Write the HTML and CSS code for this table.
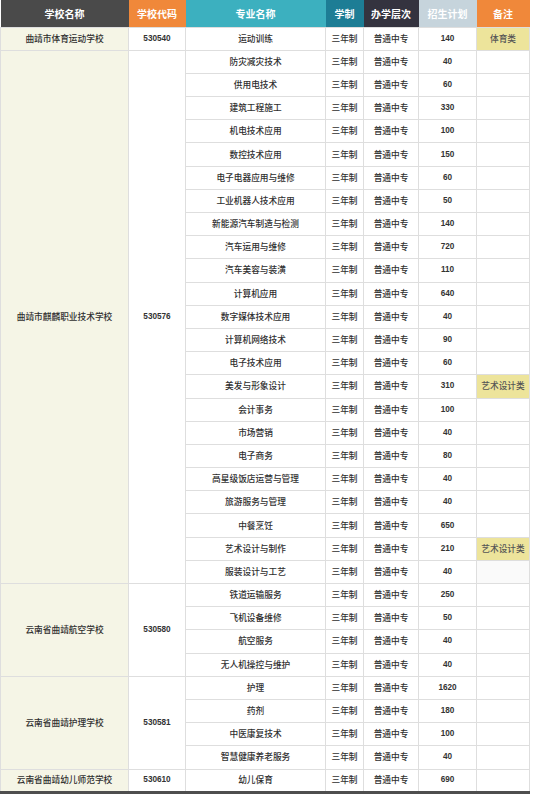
FILE: index.html
```html
<!DOCTYPE html>
<html lang="zh-CN">
<head>
<meta charset="utf-8">
<title>招生计划</title>
<link rel="stylesheet" href="styles.css">
</head>
<body>
<table class="plan">
  <colgroup>
    <col class="c-name"><col class="c-code"><col class="c-major"><col class="c-sys"><col class="c-level"><col class="c-num"><col class="c-note">
  </colgroup>
  <thead>
    <tr>
      <th class="h-name">学校名称</th>
      <th class="h-code">学校代码</th>
      <th class="h-major">专业名称</th>
      <th class="h-sys">学制</th>
      <th class="h-level">办学层次</th>
      <th class="h-num">招生计划</th>
      <th class="h-note">备注</th>
    </tr>
  </thead>
  <tbody>
    <tr><td class="school">曲靖市体育运动学校</td><td class="code">530540</td><td>运动训练</td><td>三年制</td><td>普通中专</td><td class="num">140</td><td class="note tag">体育类</td></tr>

    <tr><td class="school" rowspan="23">曲靖市麒麟职业技术学校</td><td class="code" rowspan="23">530576</td><td>防灾减灾技术</td><td>三年制</td><td>普通中专</td><td class="num">40</td><td class="note"></td></tr>
    <tr><td>供用电技术</td><td>三年制</td><td>普通中专</td><td class="num">60</td><td class="note"></td></tr>
    <tr><td>建筑工程施工</td><td>三年制</td><td>普通中专</td><td class="num">330</td><td class="note"></td></tr>
    <tr><td>机电技术应用</td><td>三年制</td><td>普通中专</td><td class="num">100</td><td class="note"></td></tr>
    <tr><td>数控技术应用</td><td>三年制</td><td>普通中专</td><td class="num">150</td><td class="note"></td></tr>
    <tr><td>电子电器应用与维修</td><td>三年制</td><td>普通中专</td><td class="num">60</td><td class="note"></td></tr>
    <tr><td>工业机器人技术应用</td><td>三年制</td><td>普通中专</td><td class="num">50</td><td class="note"></td></tr>
    <tr><td>新能源汽车制造与检测</td><td>三年制</td><td>普通中专</td><td class="num">140</td><td class="note"></td></tr>
    <tr><td>汽车运用与维修</td><td>三年制</td><td>普通中专</td><td class="num">720</td><td class="note"></td></tr>
    <tr><td>汽车美容与装潢</td><td>三年制</td><td>普通中专</td><td class="num">110</td><td class="note"></td></tr>
    <tr><td>计算机应用</td><td>三年制</td><td>普通中专</td><td class="num">640</td><td class="note"></td></tr>
    <tr><td>数字媒体技术应用</td><td>三年制</td><td>普通中专</td><td class="num">40</td><td class="note"></td></tr>
    <tr><td>计算机网络技术</td><td>三年制</td><td>普通中专</td><td class="num">90</td><td class="note"></td></tr>
    <tr><td>电子技术应用</td><td>三年制</td><td>普通中专</td><td class="num">60</td><td class="note"></td></tr>
    <tr><td>美发与形象设计</td><td>三年制</td><td>普通中专</td><td class="num">310</td><td class="note tag">艺术设计类</td></tr>
    <tr><td>会计事务</td><td>三年制</td><td>普通中专</td><td class="num">100</td><td class="note"></td></tr>
    <tr><td>市场营销</td><td>三年制</td><td>普通中专</td><td class="num">40</td><td class="note"></td></tr>
    <tr><td>电子商务</td><td>三年制</td><td>普通中专</td><td class="num">80</td><td class="note"></td></tr>
    <tr><td>高星级饭店运营与管理</td><td>三年制</td><td>普通中专</td><td class="num">40</td><td class="note"></td></tr>
    <tr><td>旅游服务与管理</td><td>三年制</td><td>普通中专</td><td class="num">40</td><td class="note"></td></tr>
    <tr><td>中餐烹饪</td><td>三年制</td><td>普通中专</td><td class="num">650</td><td class="note"></td></tr>
    <tr><td>艺术设计与制作</td><td>三年制</td><td>普通中专</td><td class="num">210</td><td class="note tag">艺术设计类</td></tr>
    <tr><td>服装设计与工艺</td><td>三年制</td><td>普通中专</td><td class="num">40</td><td class="note faint"></td></tr>

    <tr><td class="school" rowspan="4">云南省曲靖航空学校</td><td class="code" rowspan="4">530580</td><td>铁道运输服务</td><td>三年制</td><td>普通中专</td><td class="num">250</td><td class="note"></td></tr>
    <tr><td>飞机设备维修</td><td>三年制</td><td>普通中专</td><td class="num">50</td><td class="note"></td></tr>
    <tr><td>航空服务</td><td>三年制</td><td>普通中专</td><td class="num">40</td><td class="note"></td></tr>
    <tr><td>无人机操控与维护</td><td>三年制</td><td>普通中专</td><td class="num">40</td><td class="note"></td></tr>

    <tr><td class="school" rowspan="4">云南省曲靖护理学校</td><td class="code" rowspan="4">530581</td><td>护理</td><td>三年制</td><td>普通中专</td><td class="num">1620</td><td class="note"></td></tr>
    <tr><td>药剂</td><td>三年制</td><td>普通中专</td><td class="num">180</td><td class="note"></td></tr>
    <tr><td>中医康复技术</td><td>三年制</td><td>普通中专</td><td class="num">100</td><td class="note"></td></tr>
    <tr><td>智慧健康养老服务</td><td>三年制</td><td>普通中专</td><td class="num">40</td><td class="note"></td></tr>

    <tr class="last"><td class="school">云南省曲靖幼儿师范学校</td><td class="code">530610</td><td>幼儿保育</td><td>三年制</td><td>普通中专</td><td class="num">690</td><td class="note"></td></tr>
  </tbody>
</table>
</body>
</html>
```

FILE: styles.css
```css
html, body {
  margin: 0;
  padding: 0;
  background: #ffffff;
}

.plan {
  width: 529px;
  table-layout: fixed;
  border-collapse: collapse;
  font-family: "Noto Sans CJK SC", "Noto Sans", sans-serif;
  color: #333333;
}

.c-name { width: 128px; }
.c-code { width: 57px; }
.c-major { width: 140px; }
.c-sys { width: 38px; }
.c-level { width: 55px; }
.c-num { width: 58px; }
.c-note { width: 53px; }

.plan thead tr {
  height: 27px;
}

.plan th {
  padding: 0;
  font-size: 10px;
  font-weight: 700;
  color: #ffffff;
  text-align: center;
  vertical-align: middle;
  border: none;
}

.h-name { background: #4a4a4a; }
.h-code { background: #f0883a; }
.h-major { background: #3cb0bf; }
.h-sys { background: #1d7d95; }
.h-level { background: #34333f; }
.h-num { background: #c6d4dc; color: #f4f7f9; }
.h-note { background: #f0883a; }

.plan tbody tr {
  height: 23.2px;
}

.plan td {
  padding: 0;
  font-size: 8.7px;
  font-weight: 500;
  line-height: 10px;
  text-align: center;
  vertical-align: middle;
  border: 1px solid #dedede;
  white-space: nowrap;
  overflow: hidden;
  color: #2f2f2f;
}

.plan td.school {
  background: #f5f5e6;
  font-size: 8.7px;
}

.plan td.code,
.plan td.num {
  font-family: "Liberation Sans", "Noto Sans", sans-serif;
  font-weight: 700;
  font-size: 8.2px;
  color: #333333;
}

.plan td.tag {
  background: #ede49b;
  color: #555555;
}

.plan td.faint {
  background: #fafafa;
}

.plan tr.last td {
  border-bottom: 3px solid #4e4e4e;
}
```
